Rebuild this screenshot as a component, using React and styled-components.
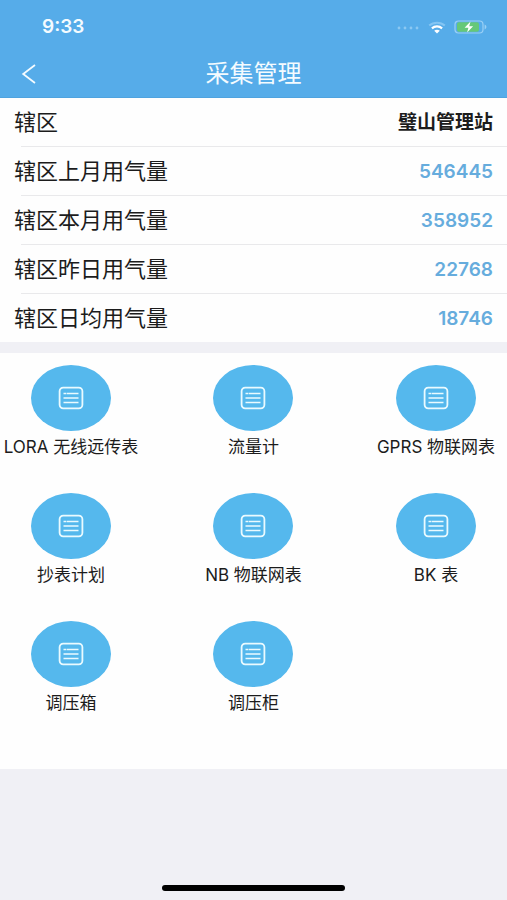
import React from 'react';
import styled, { createGlobalStyle } from 'styled-components';

const GlobalStyle = createGlobalStyle`
  *, *::before, *::after { box-sizing: border-box; }
  body {
    margin: 0;
    background: #f0f0f5;
    color: #1c1c1c;
    font-family: Inter, "Noto Sans CJK SC", sans-serif;
  }
`;

const Page = styled.div`
  min-height: 100vh;
  display: flex;
  flex-direction: column;
`;

const Header = styled.header`
  background: #56ace9;
  color: #f4fbff;
  border-bottom: 1px solid #4fa3df;
`;

const StatusBar = styled.div`
  height: 50px;
  padding: 4px 19px 0 42px;
  display: flex;
  align-items: center;
  justify-content: space-between;
`;

const Clock = styled.time`
  font-size: 19px;
  line-height: 24px;
  font-weight: 600;
`;

const StatusIcons = styled.div`
  display: flex;
  align-items: center;
  gap: 8px;
`;

const NavBar = styled.div`
  height: 47px;
  padding: 0 15px;
  display: grid;
  grid-template-columns: 32px 1fr 32px;
  align-items: center;
`;

const BackButton = styled.button`
  height: 32px;
  padding: 0 0 0 6px;
  border: 0;
  background: none;
  color: inherit;
  display: flex;
  align-items: center;
  cursor: pointer;
`;

const Title = styled.h1`
  margin: 0;
  font-size: 24px;
  line-height: 32px;
  font-weight: 400;
  text-align: center;
`;

const StatList = styled.dl`
  margin: 0;
  background: #fefefe;
`;

const StatRow = styled.div`
  display: grid;
  grid-template-columns: auto 1fr;
  align-items: center;

  & + &::before {
    content: '';
    grid-column: 1 / -1;
    height: 1px;
    margin-left: 21px;
    background: #e9e9eb;
  }
`;

const StatLabel = styled.dt`
  padding-left: 14px;
  font-size: 22px;
  line-height: 48px;
`;

const StatValue = styled.dd`
  margin: 0;
  padding: 2px 14px 0 0;
  text-align: right;
  line-height: 46px;
  font-size: 19px;
  font-weight: ${({ $numeric }) => ($numeric ? 600 : 700)};
  color: ${({ $numeric }) => ($numeric ? '#66acdd' : '#1c1c1c')};
`;

const MenuGrid = styled.nav`
  margin-top: 11px;
  padding: 12px 0 52px;
  background: #fefefe;
  display: grid;
  grid-template-columns: repeat(3, 28%);
  justify-content: space-between;
  row-gap: 32px;
`;

const MenuButton = styled.button`
  padding: 0;
  border: 0;
  background: none;
  color: inherit;
  font-family: inherit;
  font-size: 17px;
  line-height: 28px;
  white-space: nowrap;
  display: flex;
  flex-direction: column;
  align-items: center;
  gap: 2px;
  cursor: pointer;
`;

const IconDisc = styled.span`
  width: 80px;
  height: 66px;
  border-radius: 50%;
  background: #55b8ed;
  color: #eafaff;
  display: flex;
  align-items: center;
  justify-content: center;
`;

const HomeIndicator = styled.div`
  width: 36%;
  height: 6px;
  margin: auto auto 9px;
  border-radius: 3px;
  background: #000;
`;

const stats = [
  { label: '辖区', value: '璧山管理站' },
  { label: '辖区上月用气量', value: '546445', numeric: true },
  { label: '辖区本月用气量', value: '358952', numeric: true },
  { label: '辖区昨日用气量', value: '22768', numeric: true },
  { label: '辖区日均用气量', value: '18746', numeric: true },
];

const menu = [
  'LORA 无线远传表',
  '流量计',
  'GPRS 物联网表',
  '抄表计划',
  'NB 物联网表',
  'BK 表',
  '调压箱',
  '调压柜',
];

const SignalDots = () => (
  <svg width="24" height="6" viewBox="0 0 24 6" fill="#8bc8f2" aria-hidden="true">
    <circle cx="3" cy="4" r="1.4" />
    <circle cx="9" cy="4" r="1.4" />
    <circle cx="15" cy="4" r="1.4" />
    <circle cx="21" cy="4" r="1.4" />
  </svg>
);

const WifiIcon = () => (
  <svg width="18" height="13" viewBox="0 0 18 13" fill="none" aria-hidden="true">
    <path d="M1.2 4.6C5.6.7 12.4.7 16.8 4.6" stroke="#84c5f3" strokeWidth="2" />
    <path d="M3.9 7.3c2.9-2.5 7.3-2.5 10.2 0" stroke="#fff" strokeWidth="2.2" />
    <path d="M6.2 9.8c1.6-1.4 4-1.4 5.6 0L9 12.4z" fill="#fff" />
  </svg>
);

const BatteryIcon = () => (
  <svg width="34" height="14" viewBox="0 0 34 14" fill="none" aria-hidden="true">
    <rect x="1" y="1" width="28" height="12" rx="3.5" stroke="#9bd0f5" strokeWidth="1.2" />
    <rect x="3" y="2.2" width="22" height="9.6" rx="2" fill="#66c878" />
    <path d="M30.6 4.6c2.4.8 2.4 4 0 4.8z" fill="#9bd0f5" />
    <path d="M16.5 1.6 10.6 7.8h3.8l-1.3 4.6 6-6.2h-3.9z" fill="#fff" />
  </svg>
);

const ChevronIcon = () => (
  <svg width="16" height="20" viewBox="0 0 16 20" fill="none" stroke="currentColor" strokeWidth="1.8" aria-hidden="true">
    <path d="M14 1 2.2 10 14 19" />
  </svg>
);

const ListIcon = () => (
  <svg width="26" height="24" viewBox="0 0 26 24" fill="none" stroke="currentColor" aria-hidden="true">
    <rect x="1.6" y="1.6" width="22.8" height="20.8" rx="3.6" strokeWidth="1.8" />
    <path d="M5.5 7.5h2.6M8.6 7.5h11.9M5.5 12h15M5.5 16.5h15" strokeWidth="1.7" />
  </svg>
);

export default function App() {
  return (
    <Page>
      <GlobalStyle />
      <Header>
        <StatusBar>
          <Clock>9:33</Clock>
          <StatusIcons>
            <SignalDots />
            <WifiIcon />
            <BatteryIcon />
          </StatusIcons>
        </StatusBar>
        <NavBar>
          <BackButton type="button" aria-label="返回">
            <ChevronIcon />
          </BackButton>
          <Title>采集管理</Title>
        </NavBar>
      </Header>
      <StatList>
        {stats.map(({ label, value, numeric }) => (
          <StatRow key={label}>
            <StatLabel>{label}</StatLabel>
            <StatValue $numeric={numeric}>{value}</StatValue>
          </StatRow>
        ))}
      </StatList>
      <MenuGrid>
        {menu.map((name) => (
          <MenuButton key={name} type="button">
            <IconDisc>
              <ListIcon />
            </IconDisc>
            {name}
          </MenuButton>
        ))}
      </MenuGrid>
      <HomeIndicator />
    </Page>
  );
}
